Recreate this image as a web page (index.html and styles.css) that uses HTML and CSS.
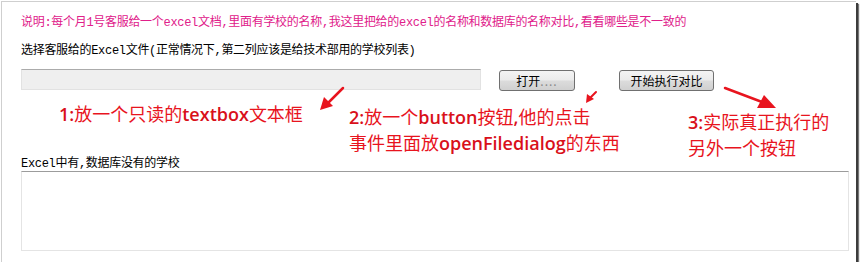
FILE: index.html
```html
<!DOCTYPE html>
<html lang="zh">
<head>
<meta charset="utf-8">
<title>Excel 对比</title>
<link rel="stylesheet" href="styles.css">
</head>
<body>
<div class="frame">
  <p class="note">说明:每个月1号客服给一个excel文档,里面有学校的名称,我这里把给的excel的名称和数据库的名称对比,看看哪些是不一致的</p>
  <p class="label">选择客服给的Excel文件(正常情况下,第二列应该是给技术部用的学校列表)</p>
  <div class="controls">
    <div class="textbox"></div>
    <button class="btn btn-open">打开<span class="dots">....</span></button>
    <button class="btn btn-run">开始执行对比</button>
  </div>
  <p class="label result-label">Excel中有,数据库没有的学校</p>
  <div class="result"></div>

  <div class="ann ann1"><b>1:</b>放一个只读的<b>textbox</b>文本框</div>
  <div class="ann ann2"><b>2:</b>放一个<b>button</b>按钮<b>,</b>他的点击<br>事件里面放<b>openFiledialog</b>的东西</div>
  <div class="ann ann3"><b>3:</b>实际真正执行的<br>另外一个按钮</div>

  <svg class="arrows" width="855" height="261" viewBox="0 0 855 261">
    <g fill="#e8141e" stroke="#e8141e" stroke-linecap="round">
      <line x1="341" y1="86" x2="326" y2="101" stroke-width="2.5"/>
      <polygon points="318,108 322,95 331,104" stroke="none"/>
      <line x1="594" y1="90" x2="589" y2="95" stroke-width="2"/>
      <polygon points="584,101 585,92 592,97" stroke="none"/>
      <line x1="723" y1="86" x2="760" y2="100" stroke-width="2.5"/>
      <polygon points="774,106 755,106 762,93" stroke="none"/>
    </g>
  </svg>
</div>
</body>
</html>
```
FILE: styles.css
```css
html, body {
  margin: 0;
  padding: 0;
  background: #ffffff;
}

.frame {
  position: relative;
  box-sizing: border-box;
  margin: 1px 0 0 1px;
  width: 855px;
  height: 261px;
  border-left: 1px solid #cfcfcf;
  border-top: 1px solid #cfcfcf;
  background: #ffffff;
  box-shadow: 2px 2px 0 #3c3c3c, 3px 3px 1px #777777;
  padding: 14px 0 0 19px;
  font-family: "Liberation Mono", "Noto Sans CJK SC", monospace;
  font-size: 12px;
  color: #000;
}

.note {
  margin: 0;
  line-height: 14px;
  letter-spacing: -0.3px;
  color: #e0208a;
}

.label {
  margin: 14px 0 0 0;
  line-height: 14px;
  letter-spacing: -0.3px;
  color: #000;
}

.controls {
  display: flex;
  align-items: flex-start;
  margin-top: 11px;
}

.textbox {
  box-sizing: border-box;
  width: 460px;
  height: 21px;
  background: #efefef;
  border: 1px solid #e2e2e2;
  border-top-color: #ababab;
}

.btn {
  box-sizing: border-box;
  height: 21px;
  margin-top: 1px;
  padding: 0;
  border: 1px solid #707070;
  border-radius: 3px;
  background: linear-gradient(#f4f4f4 0%, #ebebeb 48%, #dcdcdc 52%, #d0d0d0 100%);
  font-family: "Noto Sans CJK SC", sans-serif;
  font-size: 12px;
  line-height: 17px;
  color: #000;
}

.btn-open {
  width: 76px;
  margin-left: 18px;
}

.dots {
  color: #8a8a8a;
  letter-spacing: 1px;
}

.btn-run {
  width: 95px;
  margin-left: 44px;
}

.result-label {
  margin-top: 66px;
}

.result {
  box-sizing: border-box;
  width: 828px;
  height: 80px;
  margin-top: 0;
  border: 1px solid #e4e4e4;
  border-top-color: #9c9c9c;
}

.ann {
  position: absolute;
  font-family: "Noto Sans CJK SC", sans-serif;
  font-size: 18px;
  line-height: 25px;
  color: #e8141e;
  white-space: nowrap;
}

.ann b {
  font-family: "Open Sans", "Noto Sans", sans-serif;
  font-weight: 600;
  color: #d9101a;
}

.ann1 {
  left: 57px;
  top: 99px;
}

.ann2 {
  left: 347px;
  top: 102px;
}

.ann3 {
  left: 686px;
  top: 107px;
}

.arrows {
  position: absolute;
  left: 0;
  top: 0;
  pointer-events: none;
}
```
